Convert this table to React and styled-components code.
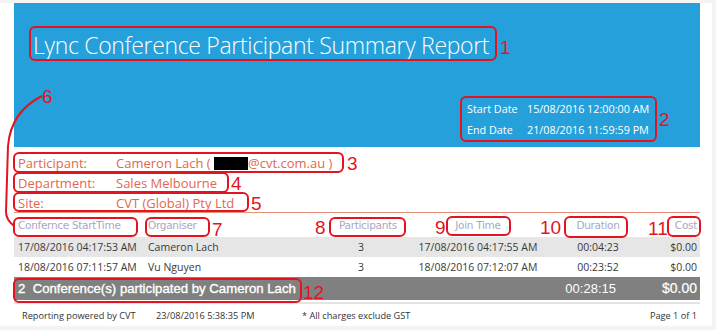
import styled, { createGlobalStyle } from 'styled-components';

const GlobalStyle = createGlobalStyle`
    html, body {
        margin: 0;
        padding: 0;
        background: #f4f4f4;
    }
`;

const rows = [
    { start: '17/08/2016 04:17:53 AM', organiser: 'Cameron Lach', participants: 3, join: '17/08/2016 04:17:55 AM', duration: '00:04:23', cost: '$0.00' },
    { start: '18/08/2016 07:11:57 AM', organiser: 'Vu Nguyen', participants: 3, join: '18/08/2016 07:12:07 AM', duration: '00:23:52', cost: '$0.00' },
];

// red marker boxes drawn over the screenshot
const marks = [
    { x: 30, y: 27, w: 466, h: 33, label: '1', lx: 500, ly: 54 },
    { x: 461, y: 97, w: 195, h: 44, label: '2', lx: 659, ly: 126 },
    { x: 14, y: 153, w: 329, h: 19, label: '3', lx: 347, ly: 170 },
    { x: 14, y: 173, w: 214, h: 19, label: '4', lx: 231, ly: 190 },
    { x: 14, y: 193, w: 234, h: 18, label: '5', lx: 251, ly: 210 },
    { x: 14, y: 218, w: 123, h: 18 },
    { x: 146, y: 218, w: 63, h: 18, label: '7', lx: 212, ly: 236 },
    { x: 330, y: 218, w: 75, h: 18, label: '8', lx: 315, ly: 234 },
    { x: 447, y: 217, w: 63, h: 18, label: '9', lx: 435, ly: 234 },
    { x: 565, y: 217, w: 62, h: 20, label: '10', lx: 540, ly: 234 },
    { x: 668, y: 217, w: 32, h: 19, label: '11', lx: 648, ly: 235 },
    { x: 14, y: 279, w: 287, h: 23, label: '12', lx: 303, ly: 299 },
];

const App = () => {
    return (
        <Page>
            <GlobalStyle />
            <Sheet>
                <Banner>
                    <Title>Lync Conference Participant Summary Report</Title>
                    <DateBlock>
                        <span>Start Date</span>
                        <span>15/08/2016 12:00:00 AM</span>
                        <span>End Date</span>
                        <span>21/08/2016 11:59:59 PM</span>
                    </DateBlock>
                </Banner>

                <Info>
                    <InfoRow>
                        <InfoLabel>Participant:</InfoLabel>
                        <span>
                            Cameron Lach ( <Redacted />@cvt.com.au )
                        </span>
                    </InfoRow>
                    <InfoRow>
                        <InfoLabel>Department:</InfoLabel>
                        <span>Sales Melbourne</span>
                    </InfoRow>
                    <InfoRow>
                        <InfoLabel>Site:</InfoLabel>
                        <span>CVT (Global) Pty Ltd</span>
                    </InfoRow>
                </Info>

                <HeadRow>
                    <Cell>Confernce StartTime</Cell>
                    <Cell>Organiser</Cell>
                    <Cell $align='center'>Participants</Cell>
                    <Cell $align='center'>Join Time</Cell>
                    <Cell $align='center'>Duration</Cell>
                    <Cell $align='right'>Cost</Cell>
                </HeadRow>

                {rows.map((r, i) => (
                    <DataRow key={i} $shaded={i % 2 === 0}>
                        <Cell>{r.start}</Cell>
                        <Cell>{r.organiser}</Cell>
                        <Cell $indent={28}>{r.participants}</Cell>
                        <Cell $align='center'>{r.join}</Cell>
                        <Cell $align='center'>{r.duration}</Cell>
                        <Cell $align='right'>{r.cost}</Cell>
                    </DataRow>
                ))}

                <TotalRow>
                    <TotalText>2&nbsp; Conference(s) participated by Cameron Lach</TotalText>
                    <TotalDuration>00:28:15</TotalDuration>
                    <TotalCost>$0.00</TotalCost>
                </TotalRow>

                <Footer>
                    <FooterItem $w={134}>Reporting powered by CVT</FooterItem>
                    <FooterItem $w={146}>23/08/2016 5:38:35 PM</FooterItem>
                    <FooterItem $grow>* All charges exclude GST</FooterItem>
                    <FooterItem>Page 1 of 1</FooterItem>
                </Footer>
            </Sheet>

            <Marks viewBox='0 0 716 330'>
                {marks.map((m, i) => (
                    <g key={i}>
                        <rect x={m.x} y={m.y} width={m.w} height={m.h} rx='5' />
                        {m.label && <text x={m.lx} y={m.ly}>{m.label}</text>}
                    </g>
                ))}
                <text x='42' y='103'>6</text>
                <path d='M42 96 C 22 106, 10 122, 8 146 L 6 212 C 6 218, 9 222, 14 226' />
            </Marks>
        </Page>
    );
};

const Page = styled.div`
    position: relative;
    width: 716px;
    height: 330px;
    overflow: hidden;
    font-family: 'Open Sans', 'Noto Sans', sans-serif;
`;

const Sheet = styled.div`
    margin-top: 3px;
    width: 712px;
    height: 323px;
    padding: 0 12px 0 14px;
    box-sizing: border-box;
    background: #ffffff;
    display: flex;
    flex-direction: column;
`;

const Banner = styled.header`
    height: 146px;
    background: #26a0da;
    color: #ffffff;
    display: flex;
    flex-direction: column;
    padding: 26px 0 0 19px;
    box-sizing: border-box;
`;

const Title = styled.h1`
    margin: 0;
    font-weight: 300;
    font-size: 23px;
    line-height: 32px;
    letter-spacing: -0.32px;
`;

const DateBlock = styled.div`
    margin: 40px 0 0 434px;
    display: grid;
    grid-template-columns: 60px auto;
    row-gap: 5px;
    font-size: 10.8px;
    line-height: 16px;
`;

const Info = styled.section`
    padding: 6px 0 0 4px;
    height: 59px;
    border-bottom: 1px solid #e8907a;
    color: #e2684c;
    font-size: 13px;
`;

const InfoRow = styled.div`
    display: flex;
    height: 20px;
    line-height: 20px;
`;

const InfoLabel = styled.span`
    width: 98px;
`;

const Redacted = styled.span`
    display: inline-block;
    width: 34px;
    height: 13px;
    background: #000000;
    vertical-align: -2px;
`;

const gridCols = '130px 186px 75px 145px 95px 1fr';

const HeadRow = styled.div`
    display: grid;
    grid-template-columns: ${gridCols};
    height: 24px;
    align-items: center;
    color: #a8a8c4;
    font-family: 'DejaVu Sans', sans-serif;
    font-size: 10.5px;
    letter-spacing: -0.3px;
`;

const DataRow = styled.div`
    display: grid;
    grid-template-columns: ${gridCols};
    height: 20px;
    align-items: center;
    background: ${(p) => (p.$shaded ? '#e6e6e6' : '#ffffff')};
    color: #3a3a3a;
    font-size: 10.5px;
`;

const Cell = styled.div`
    padding: 0 3px 0 ${(p) => p.$indent || 4}px;
    text-align: ${(p) => p.$align || 'left'};
    white-space: nowrap;
`;

const TotalRow = styled.div`
    display: flex;
    align-items: center;
    height: 24px;
    background: #808080;
    color: #ffffff;
    font-family: 'Liberation Sans', sans-serif;
    padding: 0 3px 0 4px;
`;

const TotalText = styled.span`
    flex: 1;
    font-size: 13.2px;
    -webkit-text-stroke: 0.35px #ffffff;
`;

const TotalDuration = styled.span`
    font-size: 13px;
    margin-right: 46px;
`;

const TotalCost = styled.span`
    font-size: 14px;
    -webkit-text-stroke: 0.2px #ffffff;
`;

const Footer = styled.footer`
    display: flex;
    align-items: center;
    margin-top: 2px;
    border-top: 2px solid #e4e4e4;
    height: 22px;
    padding: 0 3px 0 8px;
    color: #333333;
    font-size: 9.2px;
`;

const FooterItem = styled.span`
    width: ${(p) => (p.$w ? `${p.$w}px` : 'auto')};
    flex: ${(p) => (p.$grow ? 1 : 'none')};
`;

const Marks = styled.svg`
    position: absolute;
    inset: 0;
    width: 716px;
    height: 330px;
    pointer-events: none;
    fill: none;
    stroke: #e3141f;
    stroke-width: 2;

    text {
        fill: #e3141f;
        stroke: none;
        font-family: 'Liberation Sans', sans-serif;
        font-size: 19px;
    }
`;

export default App;
